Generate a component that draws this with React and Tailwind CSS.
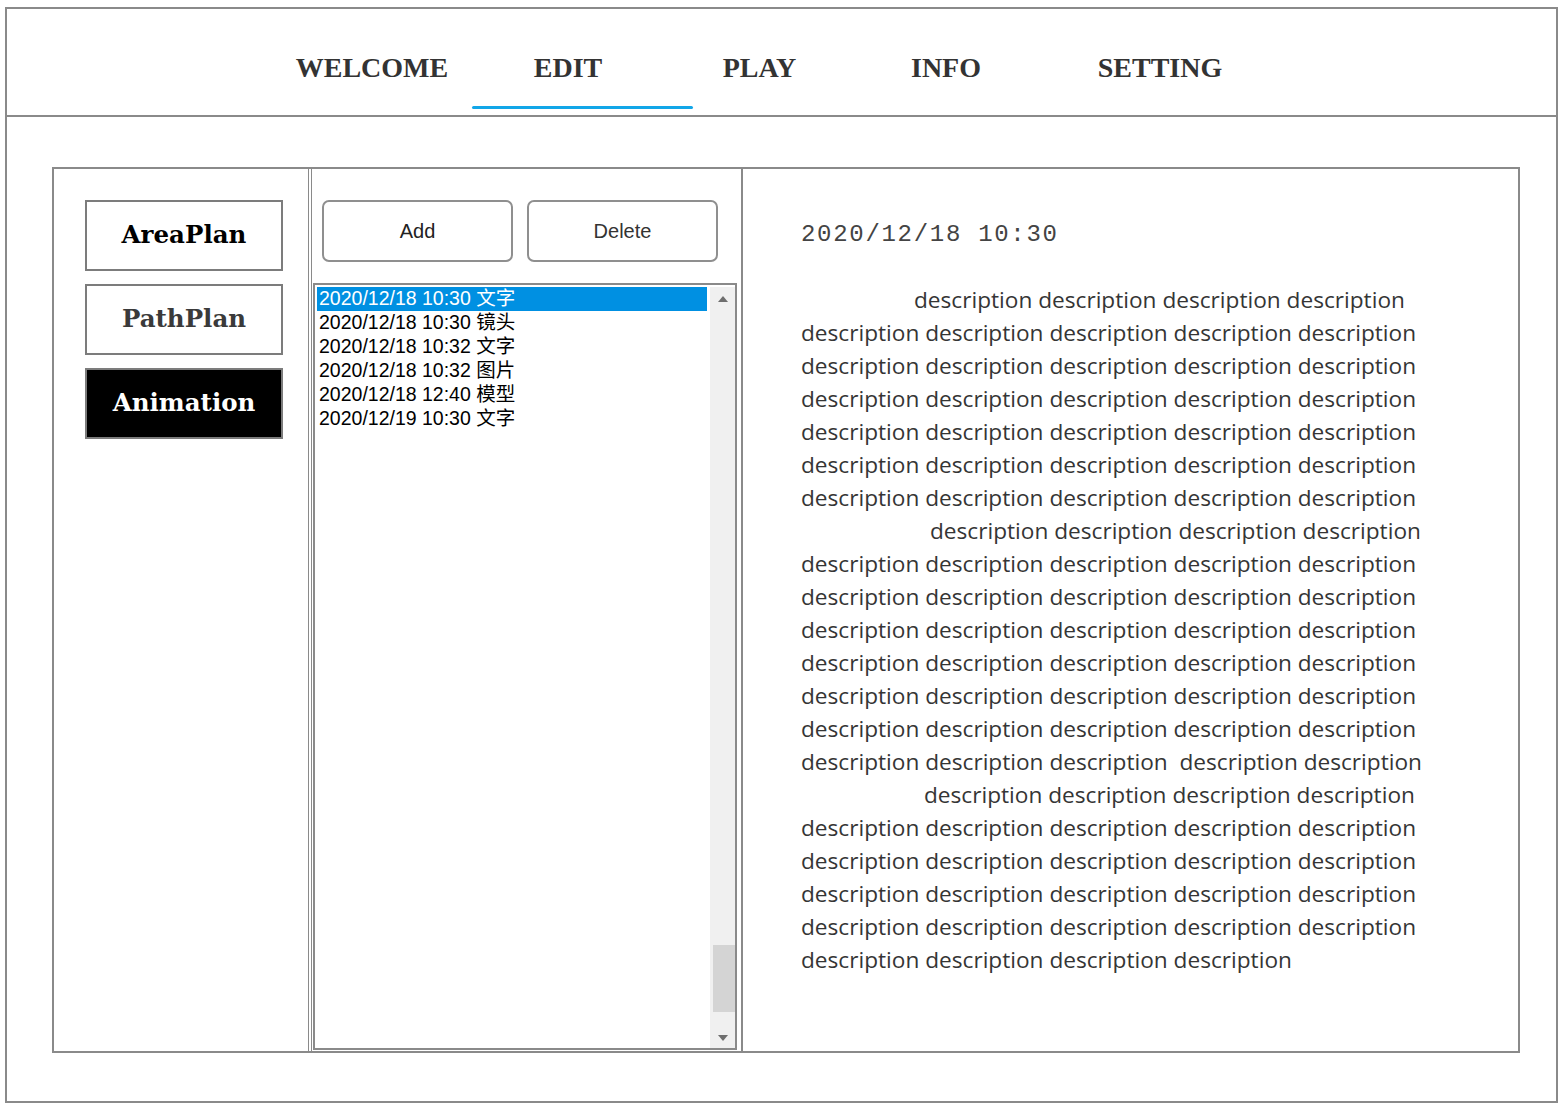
import React from "react";

const tabs = [
  { label: "WELCOME", w: "w-[180px]" },
  { label: "EDIT", w: "w-[212px]" },
  { label: "PLAY", w: "w-[171px]" },
  { label: "INFO", w: "w-[202px]" },
  { label: "SETTING", w: "w-[226px]" },
];

const items = [
  "2020/12/18 10:30 文字",
  "2020/12/18 10:30 镜头",
  "2020/12/18 10:32 文字",
  "2020/12/18 10:32 图片",
  "2020/12/18 12:40 模型",
  "2020/12/19 10:30 文字",
];

const w4 = "description description description description";
const w5 = "description description description description description";

// each line of the description, with its indent
const lines = [
  { text: w4, pad: "pl-[113px]" },
  { text: w5 },
  { text: w5 },
  { text: w5 },
  { text: w5 },
  { text: w5 },
  { text: w5 },
  { text: w4, pad: "pl-[129px]" },
  { text: w5 },
  { text: w5 },
  { text: w5 },
  { text: w5 },
  { text: w5 },
  { text: w5 },
  { text: "description description description  description description" },
  { text: w4, pad: "pl-[123px]" },
  { text: w5 },
  { text: w5 },
  { text: w5 },
  { text: w5 },
  { text: w4 },
];

const PlanButton = ({ label, active, muted }) => (
  <div
    className={`w-[198px] h-[71px] border-2 border-[#7c7c7c] flex items-center justify-center text-[24.5px] font-bold font-['DejaVu_Serif',serif] ${
      active ? "bg-black text-white" : muted ? "bg-white text-[#3a3a3a]" : "bg-white text-black"
    }`}
  >
    {label}
  </div>
);

const App = () => {
  return (
    <div className="w-[1565px] h-[1107px] bg-white pt-[7px] pl-[5px]">
      <div className="w-[1553px] h-[1096px] border-2 border-[#8a8a8a]">
        {/* header */}
        <div className="relative h-[108px] border-b-2 border-[#8a8a8a] pt-[43px] pl-[275px] flex">
          {tabs.map((t) => (
            <div
              key={t.label}
              className={`${t.w} text-center text-[28px] leading-[32px] font-bold text-[#333] font-['Liberation_Serif',serif]`}
            >
              {t.label}
            </div>
          ))}
          <div className="absolute left-[465px] top-[97px] w-[221px] h-[3px] bg-[#12a6e8] rounded-full"></div>
        </div>

        {/* main panel */}
        <div className="ml-[45px] mt-[50px] w-[1468px] h-[886px] border-2 border-[#8a8a8a] flex">
          <div className="w-[258px] h-full border-r-4 border-double border-[#8a8a8a] pl-[31px] pt-[31px] flex flex-col gap-[13px]">
            <PlanButton label="AreaPlan" />
            <PlanButton label="PathPlan" muted />
            <PlanButton label="Animation" active />
          </div>

          <div className="w-[431px] h-full border-r-2 border-[#8a8a8a] pt-[31px] flex flex-col font-['Liberation_Sans','Noto_Sans_CJK_SC',sans-serif]">
            <div className="pl-[10px] flex gap-[14px]">
              <button className="w-[191px] h-[62px] border-2 border-[#8f8f8f] rounded-[7px] text-[20px] text-[#222] bg-white">
                Add
              </button>
              <button className="w-[191px] h-[62px] border-2 border-[#8f8f8f] rounded-[7px] text-[20px] text-[#333] bg-white">
                Delete
              </button>
            </div>
            <div className="mt-[21px] ml-px w-[424px] h-[767px] border-2 border-[#8a8a8a] flex p-[2px] pr-0 pb-0">
              <div className="flex-1 flex flex-col">
                {items.map((it, i) => (
                  <div
                    key={it}
                    className={`w-[390px] h-[24px] pl-[2px] text-[19.5px] leading-[23px] whitespace-nowrap ${
                      i === 0 ? "bg-[#0090e2] text-white" : "text-black"
                    }`}
                  >
                    {it}
                  </div>
                ))}
              </div>
              <div className="w-[25px] h-full bg-[#f0f0f0] flex flex-col items-center">
                <svg width="12" height="8" viewBox="0 0 12 8" className="mt-[8px]">
                  <path d="M6 1 L11 7 L1 7 Z" fill="#6e6e6e" />
                </svg>
                <div className="flex-1"></div>
                <div className="w-[22px] h-[67px] bg-[#d4d4d4] ml-[3px]"></div>
                <div className="h-[22px]"></div>
                <svg width="12" height="8" viewBox="0 0 12 8" className="mb-[6px]">
                  <path d="M1 1 L11 1 L6 7 Z" fill="#6e6e6e" />
                </svg>
              </div>
            </div>
          </div>

          <div className="flex-1 h-full pl-[58px] pt-[50px]">
            <div className="text-[24px] leading-[32px] tracking-[1.7px] text-[#444] font-['Liberation_Mono',monospace]">
              2020/12/18 10:30
            </div>
            <div className="mt-[32px] text-[22.65px] leading-[33px] text-[#353535] font-['Open_Sans',sans-serif]">
              {lines.map((l, i) => (
                <div key={i} className={`whitespace-pre ${l.pad || ""}`}>
                  {l.text}
                </div>
              ))}
            </div>
          </div>
        </div>
      </div>
    </div>
  );
};

export default App;
